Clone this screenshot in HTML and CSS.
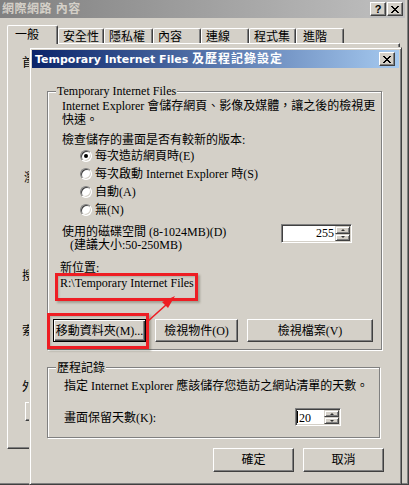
FILE: index.html
```html
<!DOCTYPE html>
<html lang="zh-Hant">
<head>
<meta charset="utf-8">
<title>網際網路 內容</title>
<link rel="stylesheet" href="styles.css">
</head>
<body>
<div class="page">
  <div class="window">
    <div class="titlebar">
      <span class="win-title">網際網路 內容</span>
      <div class="caption-btns">
        <span class="cbtn help">?</span>
        <span class="cbtn"><svg width="8" height="7" viewBox="0 0 8 7"><path d="M0 0h2v1H0zM6 0h2v1H6zM1 1h2v1H1zM5 1h2v1H5zM2 2h4v1H2zM3 3h2v1H3zM2 4h4v1H2zM1 5h2v1H1zM5 5h2v1H5zM0 6h2v1H0zM6 6h2v1H6z" fill="#000"/></svg></span>
      </div>
    </div>
    <div class="tabstrip">
      <div class="tab active">一般</div>
      <div class="tab t-sec">安全性</div>
      <div class="tab t-priv">隱私權</div>
      <div class="tab t-cont">內容</div>
      <div class="tab t-conn">連線</div>
      <div class="tab t-prog">程式集</div>
      <div class="tab t-adv">進階</div>
    </div>
    <div class="panel">
      <div class="bg-label l-home">首</div>
      <div class="bg-label l-hist">瀏</div>
      <div class="bg-label l-search">搜</div>
      <div class="bg-label l-tabs">索</div>
      <div class="bg-label l-look">外</div>
      <div class="bg-btn"></div>
    </div>
  </div>

  <div class="dialog">
    <div class="dlg-title">
      <span class="dlg-title-text">Temporary Internet Files <span class="cjk">及歷程記錄設定</span></span>
      <span class="cbtn"><svg width="8" height="7" viewBox="0 0 8 7"><path d="M0 0h2v1H0zM6 0h2v1H6zM1 1h2v1H1zM5 1h2v1H5zM2 2h4v1H2zM3 3h2v1H3zM2 4h4v1H2zM1 5h2v1H1zM5 5h2v1H5zM0 6h2v1H0zM6 6h2v1H6z" fill="#000"/></svg></span>
    </div>
    <div class="dlg-body">
      <div class="group group1">
        <div class="group-label">Temporary Internet Files</div>
        <div class="g1-text">Internet Explorer 會儲存網頁、影像及媒體，讓之後的檢視更<br>快速。</div>
        <div class="g1-check">檢查儲存的畫面是否有較新的版本:</div>
        <div class="radios">
          <div class="radio-row"><span class="radio checked"></span><span>每次造訪網頁時(E)</span></div>
          <div class="radio-row"><span class="radio"></span><span>每次啟動 Internet Explorer 時(S)</span></div>
          <div class="radio-row"><span class="radio"></span><span>自動(A)</span></div>
          <div class="radio-row"><span class="radio"></span><span>無(N)</span></div>
        </div>
        <div class="disk-row">
          <div class="disk-label">
            <div>使用的磁碟空間 (8-1024MB)(D)</div>
            <div class="indent">(建議大小:50-250MB)</div>
          </div>
          <div class="spin spin-255">
            <span class="spin-val">255</span>
            <span class="spin-btns"><span class="sb up"></span><span class="sb down"></span></span>
          </div>
        </div>
        <div class="loc-label">新位置:</div>
        <div class="loc-path">R:\Temporary Internet Files</div>
        <div class="btn-row">
          <span class="btn default w-move">移動資料夾(M)...</span>
          <span class="btn w-obj">檢視物件(O)</span>
          <span class="btn w-files">檢視檔案(V)</span>
        </div>
      </div>

      <div class="group group2">
        <div class="group-label g2-label">歷程記錄</div>
        <div class="g2-text">指定 Internet Explorer 應該儲存您造訪之網站清單的天數。</div>
        <div class="g2-row">
          <div class="g2-row-label">畫面保留天數(K):</div>
          <div class="spin spin-20">
            <span class="spin-val">20</span>
            <span class="spin-btns"><span class="sb up"></span><span class="sb down"></span></span>
          </div>
        </div>
      </div>

      <div class="dlg-actions">
        <span class="btn w-ok">確定</span>
        <span class="btn w-ok">取消</span>
      </div>
    </div>
  </div>

  <div class="annot">
    <div class="mark mark-path"></div>
    <div class="mark mark-btn"></div>
    <svg class="arrow" width="409" height="485" viewBox="0 0 409 485">
      <line x1="147" y1="322" x2="167" y2="304" stroke="#ee1d23" stroke-width="1.6"/>
      <polygon points="175,296 168,308 162,302" fill="#ee1d23"/>
    </svg>
  </div>
</div>
</body>
</html>
```
FILE: styles.css
```css
* { box-sizing: border-box; }

body {
  margin: 0;
  background: #d4d0c8;
  color: #000;
  font-family: "Liberation Serif", "Noto Sans CJK TC", serif;
  font-size: 12px;
  line-height: 14px;
}

.page {
  position: relative;
  width: 409px;
  height: 485px;
  overflow: hidden;
  background: #d4d0c8;
}

/* ---------- outer window ---------- */
.window {
  width: 409px;
  height: 485px;
  display: flex;
  flex-direction: column;
  padding-right: 3px;
  border-right: 1px solid #404040;
  border-bottom: 1px solid #404040;
  box-shadow: inset -1px -1px #808080;
}

.titlebar {
  height: 18px;
  flex: none;
  display: flex;
  align-items: center;
  justify-content: space-between;
  padding: 0 2px 0 2px;
  background: linear-gradient(to right, #808080, #c0c0c0);
}

.win-title {
  font-family: "Liberation Sans", "Noto Sans CJK TC", sans-serif;
  font-weight: bold;
  font-size: 12px;
  color: #d4d0c8;
  letter-spacing: 0.5px;
}

.caption-btns {
  display: flex;
  gap: 1px;
}

.cbtn {
  width: 16px;
  height: 14px;
  display: flex;
  align-items: center;
  justify-content: center;
  background: #d4d0c8;
  border: 1px solid;
  border-color: #fff #404040 #404040 #fff;
  box-shadow: inset -1px -1px #808080;
  font-family: "Liberation Sans", sans-serif;
  font-weight: bold;
  font-size: 11px;
  line-height: 12px;
}

.tabstrip {
  height: 25px;
  flex: none;
  display: flex;
  align-items: flex-end;
  padding-left: 7px;
}

.tab {
  height: 15px;
  padding-left: 4px;
  line-height: 14px;
  background: #d4d0c8;
  border-top: 1px solid #fff;
  border-left: 1px solid #fff;
  border-right: 1px solid #404040;
  box-shadow: inset -1px 0 #808080;
  border-radius: 2px 2px 0 0;
  font-family: "Noto Sans CJK TC", sans-serif;
  white-space: nowrap;
}

.tab.active {
  height: 19px;
  width: 51px;
  padding: 1px 0 0 7px;
  margin-bottom: -1px;
  position: relative;
  z-index: 1;
}
.t-sec { width: 46px; }
.t-priv { width: 49px; }
.t-cont { width: 48px; }
.t-conn { width: 48px; }
.t-prog { width: 47px; }
.t-adv { width: 48px; padding-left: 6px; }

.panel {
  flex: none;
  width: 393px;
  height: 406px;
  margin-left: 7px;
  border-top: 1px solid #fff;
  border-left: 1px solid #fff;
  border-right: 1px solid #404040;
  border-bottom: 1px solid #404040;
  box-shadow: inset -1px -1px #808080;
  padding-left: 14px;
  display: flex;
  flex-direction: column;
  align-items: flex-start;
  font-family: "Noto Sans CJK TC", sans-serif;
}

.bg-label {
  line-height: 14px;
  white-space: nowrap;
}
.l-home { margin-top: 11px; }
.l-hist { margin-top: 101px; margin-left: 2px; }
.l-search { margin-top: 84px; }
.l-tabs { margin-top: 41px; }
.l-look { margin-top: 42px; }
.bg-btn {
  margin-top: 9px;
  margin-left: 3px;
  width: 30px;
  height: 19px;
  border: 1px solid;
  border-color: #fff #404040 #404040 #fff;
  box-shadow: inset -1px -1px #808080;
}

/* ---------- dialog ---------- */
.dialog {
  position: absolute;
  left: 29px;
  top: 47px;
  width: 373px;
  height: 438px;
  background: #d4d0c8;
  border: 1px solid;
  border-color: #d4d0c8 #404040 #404040 #d4d0c8;
  box-shadow: inset 1px 1px #fff, inset -1px -1px #808080;
  padding: 2px;
  display: flex;
  flex-direction: column;
}

.dlg-title {
  height: 18px;
  flex: none;
  display: flex;
  align-items: center;
  justify-content: space-between;
  padding: 0 4px 0 3px;
  background: linear-gradient(to right, #0a246a, #a6caf0);
}

.dlg-title-text {
  color: #fff;
  font-family: "DejaVu Sans", "Noto Sans CJK TC", sans-serif;
  font-weight: bold;
  font-size: 11px;
  line-height: 14px;
  white-space: nowrap;
}
.dlg-title-text .cjk {
  font-family: "Noto Sans CJK TC", sans-serif;
  font-size: 12px;
  letter-spacing: 1px;
}

.dlg-body {
  padding-left: 15px;
  display: flex;
  flex-direction: column;
}

.group {
  border: 1px solid #808080;
  box-shadow: 1px 1px #fff, inset 1px 1px #fff;
}

.group-label {
  width: max-content;
  margin: -8px 0 0 8px;
  padding: 0 1px;
  background: #d4d0c8;
  line-height: 14px;
}

.group1 {
  margin-top: 23px;
  width: 335px;
  height: 259px;
}

.g1-text {
  margin-top: 1px;
  padding-left: 14px;
  white-space: nowrap;
}

.g1-check {
  margin-top: 6px;
  padding-left: 14px;
}

.radios { padding-left: 32px; }

.radio-row {
  display: flex;
  align-items: center;
  gap: 3px;
  height: 18px;
  line-height: 18px;
  white-space: nowrap;
}

.radio {
  width: 12px;
  height: 12px;
  flex: none;
  border-radius: 50%;
  border: 1px solid;
  border-color: #808080 #fff #fff #808080;
  background: #fff;
  box-shadow: inset 1px 1px #404040, inset -1px -1px #d4d0c8;
  display: flex;
  align-items: center;
  justify-content: center;
}
.radio.checked::after {
  content: "";
  width: 4px;
  height: 4px;
  border-radius: 50%;
  background: #000;
}

.disk-row {
  display: flex;
  margin-top: 5px;
  padding-left: 14px;
}
.disk-label {
  padding-top: 2px;
  line-height: 13px;
  white-space: nowrap;
}
.disk-label .indent { padding-left: 8px; }

.spin {
  display: flex;
  background: #fff;
  border: 1px solid;
  border-color: #808080 #fff #fff #808080;
  box-shadow: inset 1px 1px #404040, inset -1px -1px #d4d0c8;
  padding: 1px;
}
.spin-val {
  flex: 1;
  line-height: 15px;
  text-align: right;
  padding-right: 1px;
}
.spin-btns {
  width: 15px;
  display: flex;
  flex-direction: column;
}
.sb {
  flex: 1;
  display: flex;
  align-items: center;
  justify-content: center;
  background: #d4d0c8;
  border: 1px solid;
  border-color: #d4d0c8 #404040 #404040 #d4d0c8;
  box-shadow: inset 1px 1px #fff, inset -1px -1px #808080;
}
.sb::after {
  content: "";
  border-left: 2px solid transparent;
  border-right: 2px solid transparent;
}
.sb.up::after { border-bottom: 2px solid #333; }
.sb.down::after { border-top: 2px solid #333; }

.spin-255 {
  margin-left: auto;
  margin-right: 29px;
  width: 71px;
  height: 19px;
}
.spin-20 {
  margin-left: auto;
  margin-right: 38px;
  width: 46px;
  height: 18px;
}
.spin-20 .spin-val {
  text-align: left;
  padding-left: 1px;
  line-height: 14px;
  border-left: 1px solid #000;
  margin: 1px 0;
}

.loc-label {
  margin-top: 9px;
  padding-left: 12px;
}
.loc-path {
  margin-top: 1px;
  padding-left: 12px;
  white-space: nowrap;
}

.btn-row {
  display: flex;
  gap: 9px;
  margin-top: 29px;
  padding-left: 5px;
}

.btn {
  height: 23px;
  display: flex;
  align-items: center;
  justify-content: center;
  background: #d4d0c8;
  border: 1px solid;
  border-color: #fff #404040 #404040 #fff;
  box-shadow: inset -1px -1px #808080;
  line-height: 14px;
  white-space: nowrap;
}
.btn.default {
  border-color: #000;
  box-shadow: inset 1px 1px #fff, inset -1px -1px #404040, inset -2px -2px #808080;
}
.w-move { width: 93px; }
.w-obj { width: 83px; }
.w-files { width: 126px; }
.w-ok { width: 81px; height: 24px; }

.group2 {
  margin-top: 17px;
  width: 333px;
  height: 71px;
}
.g2-label { margin-top: -7px; }
.g2-text {
  margin-top: 4px;
  padding-left: 16px;
  white-space: nowrap;
}
.g2-row {
  display: flex;
  margin-top: 15px;
  padding-left: 16px;
}
.g2-row-label {
  padding-top: 3px;
  white-space: nowrap;
}

.dlg-actions {
  display: flex;
  justify-content: flex-end;
  gap: 9px;
  margin-top: 10px;
  padding-right: 15px;
}

/* ---------- annotations ---------- */
.annot {
  position: absolute;
  left: 0;
  top: 0;
  width: 409px;
  height: 485px;
  pointer-events: none;
}
.mark {
  position: absolute;
  border: 3px solid #ee1d23;
  box-shadow: 2px 2px 2px rgba(70, 70, 50, 0.35), inset 1px 1px 2px rgba(70, 70, 50, 0.25);
}
.mark-path {
  left: 55px;
  top: 273px;
  width: 143px;
  height: 28px;
}
.mark-btn {
  left: 47px;
  top: 313px;
  width: 102px;
  height: 36px;
}
.arrow {
  position: absolute;
  left: 0;
  top: 0;
}
```
